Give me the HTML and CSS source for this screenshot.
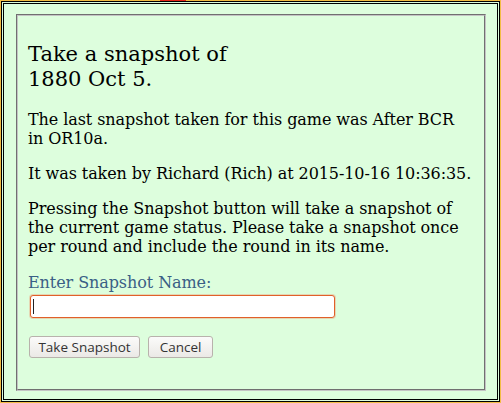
FILE: index.html
```html
<!DOCTYPE html>
<html>
<head>
<meta charset="utf-8">
<link rel="stylesheet" href="styles.css">
</head>
<body>
<div class="dialog">
  <fieldset class="panel">
    <h2 class="title">Take a snapshot of<br>1880 Oct 5.</h2>
    <p class="text">The last snapshot taken for this game was After BCR<br>in OR10a.</p>
    <p class="text">It was taken by Richard (Rich) at 2015-10-16 10:36:35.</p>
    <p class="text">Pressing the Snapshot button will take a snapshot of the current game status. Please take a snapshot once per round and include the round in its name.</p>
    <label class="label" for="snap">Enter Snapshot Name:</label>
    <div class="field"><input id="snap" class="input" type="text" autofocus><span class="caret"></span></div>
    <div class="buttons">
      <button class="btn btn-take" type="button">Take Snapshot</button>
      <button class="btn btn-cancel" type="button">Cancel</button>
    </div>
  </fieldset>
</div>
</body>
</html>
```

FILE: styles.css
```css
html, body {
  margin: 0;
  padding: 0;
}
body {
  background:
    linear-gradient(90deg, transparent 160px, #e4231a 160px, #e4231a 186px, transparent 186px) top left / 100% 1px no-repeat,
    #f3bd45;
  font-family: "DejaVu Serif", serif;
  color: #000;
  width: 501px;
  height: 403px;
  overflow: hidden;
}
.dialog {
  margin: 1px 0 0 1px;
  width: 499px;
  height: 401px;
  box-sizing: border-box;
  border: 3px double #000;
  background: #ddfedd;
  padding: 10px 11px 8px 12px;
}
.panel {
  margin: 0;
  height: 100%;
  box-sizing: border-box;
  border: 2px groove #c4c4c4;
  padding: 0 6px 0 10px;
}
.title {
  font-size: 21px;
  font-weight: normal;
  line-height: 25px;
  margin: 26px 0 18px;
}
.text {
  font-size: 16px;
  line-height: 19px;
  margin: 0 0 16px;
  letter-spacing: -0.08px;
}
.label {
  display: block;
  font-size: 16px;
  line-height: 19px;
  color: #3a5f86;
  margin-top: 17px;
  letter-spacing: -0.08px;
}
.field {
  position: relative;
  margin-top: 3px;
  padding-left: 2px;
}
.input {
  display: block;
  width: 305px;
  height: 23px;
  box-sizing: border-box;
  border: 1px solid #e0602a;
  border-radius: 3px;
  box-shadow: 0 0 0 1px rgba(240, 140, 100, 0.35);
  background: #fff;
  outline: none;
  padding: 0 3px;
  caret-color: transparent;
}
.caret {
  position: absolute;
  left: 5px;
  top: 4px;
  width: 1px;
  height: 15px;
  background: #222;
}
.buttons {
  display: flex;
  gap: 8px;
  margin-top: 18px;
  padding-left: 1px;
}
.btn {
  font-family: "Open Sans", sans-serif;
  font-size: 13.5px;
  color: #333;
  height: 22px;
  padding: 0;
  text-align: center;
  border: 1px solid #b8b2ac;
  border-radius: 3px;
  background: linear-gradient(#fbfbfa, #ebe9e6);
  line-height: 20px;
}
.btn-take {
  width: 111px;
}
.btn-cancel {
  width: 65px;
}
```
